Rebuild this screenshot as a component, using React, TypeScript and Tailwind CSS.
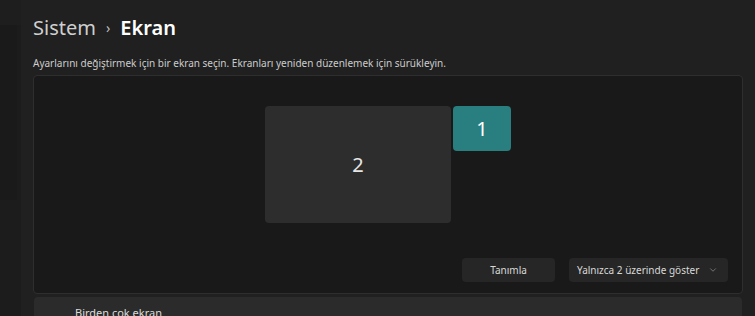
import { ChevronDown } from "lucide-react";

const font = { fontFamily: '"Noto Sans", "Open Sans", sans-serif' };

const Sidebar = () => (
  <div className="flex w-[21px] shrink-0 flex-col bg-[#1c1c1c]">
    <div className="h-[25px] bg-[#1e1e1e]" />
    <div className="h-[175px] w-[17px] bg-[#1a1a1a]" />
  </div>
);

const Monitor = ({ label, className }: { label: string; className: string }) => (
  <div className={`flex items-center justify-center rounded-[4px] text-[20px] text-[#e6e6e6] ${className}`}>
    {label}
  </div>
);

export default function App() {
  return (
    <div className="flex h-[316px] w-[755px] overflow-hidden bg-[#202020]" style={font}>
      <Sidebar />
      <div className="flex flex-1 flex-col pl-[12px] pr-[12px]">
        <h1 className="mt-[14px] flex h-[28px] shrink-0 items-center text-[20px] leading-none">
          <span className="text-[#cfcfcf]">Sistem</span>
          <span className="mx-[10px] text-[14px] text-[#bdbdbd]">›</span>
          <span className="font-semibold text-white">Ekran</span>
        </h1>
        <p className="mt-[13px] h-[16px] shrink-0 text-[10px] leading-[16px] text-[#cccccc]">
          Ayarlarını değiştirmek için bir ekran seçin. Ekranları yeniden düzenlemek için sürükleyin.
        </p>

        <div className="mt-[4px] flex h-[219px] shrink-0 flex-col rounded-[4px] border border-[#2e2e2e] bg-[#191919]">
          <div className="flex justify-center gap-[2px] pt-[30px]">
            <Monitor label="2" className="h-[117px] w-[186px] bg-[#2d2d2d]" />
            <Monitor label="1" className="h-[45px] w-[58px] bg-[#297f7f] text-white" />
          </div>
          <div className="mt-[35px] flex justify-end gap-[14px] pr-[14px]">
            <button className="h-[24px] w-[93px] rounded-[4px] bg-[#262626] text-[10px] text-[#d8d8d8]">
              Tanımla
            </button>
            <button className="flex h-[24px] w-[159px] items-center justify-between whitespace-nowrap rounded-[4px] bg-[#262626] pl-[8px] pr-[10px] text-[10px] text-[#d8d8d8]">
              <span>Yalnızca 2 üzerinde göster</span>
              <ChevronDown size={10} strokeWidth={1.5} className="text-[#a0a0a0]" />
            </button>
          </div>
        </div>

        <div className="mt-[3px] ml-[1px] mr-[1px] min-h-0 flex-1 rounded-t-[4px] bg-[#2b2b2b] pl-[41px] pt-[8px]">
          <p className="text-[11px] leading-[16px] text-[#dcdcdc]">Birden çok ekran</p>
        </div>
      </div>
    </div>
  );
}
